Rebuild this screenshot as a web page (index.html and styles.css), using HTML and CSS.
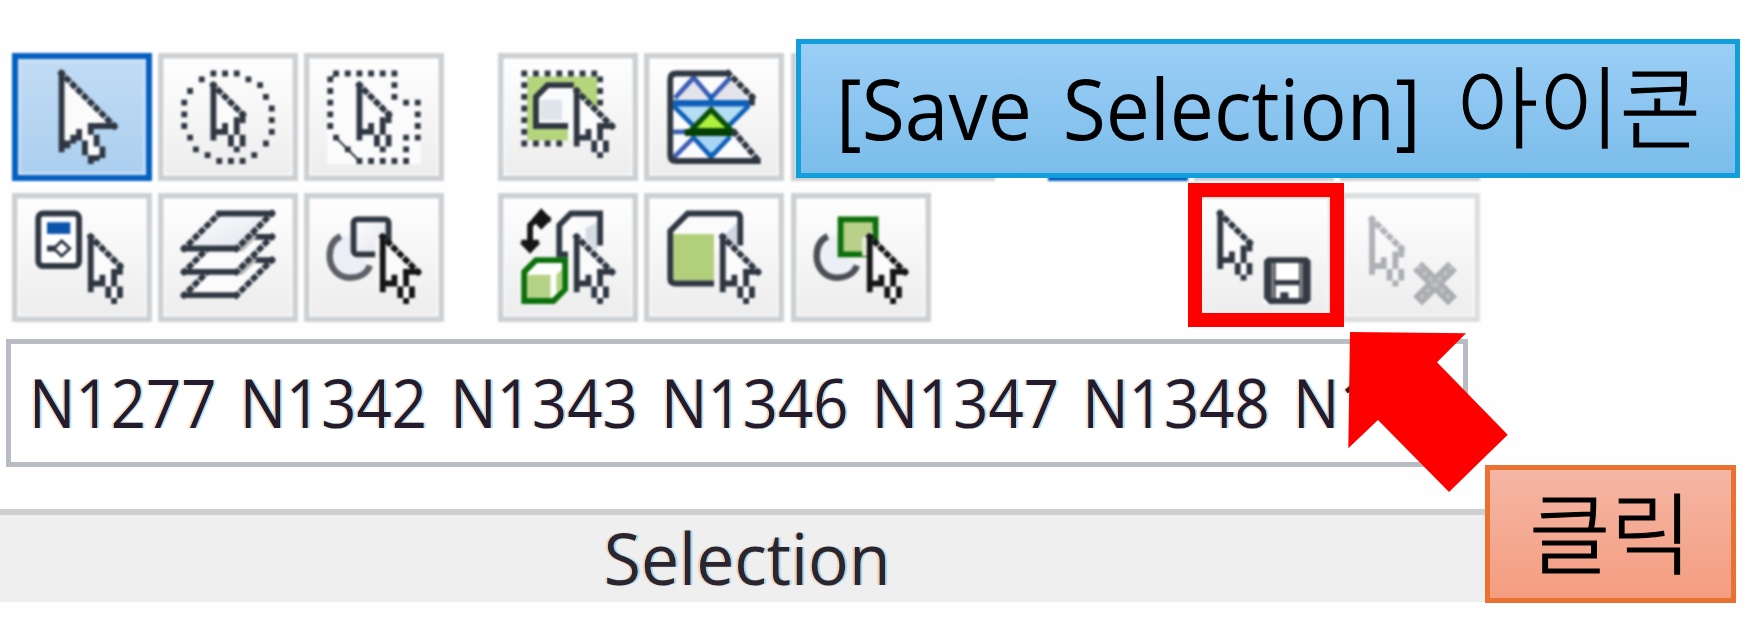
FILE: index.html
```html
<!DOCTYPE html>
<html lang="ko">
<head>
<meta charset="utf-8">
<title>Selection</title>
<link rel="stylesheet" href="styles.css">
</head>
<body>
<svg class="defs" width="0" height="0" aria-hidden="true">
  <defs>
    <linearGradient id="pane" x1="0" y1="0" x2="1" y2="1"><stop offset="0" stop-color="#fff"/><stop offset="1" stop-color="#dfe3ec"/></linearGradient>
    <g id="tail">
      <path class="ln" d="M.5 0V10M1 8.5H3M2.5 7V9M4.5 6V9M3.5 9V11M5.5 9V11M4 11.5H5"/>
    </g>
    <g id="cursor">
      <path class="w" d="M.5.5L6 6 4.8 7.5 5.5 10 4.5 12 3.2 10 2.5 8 .5 9Z"/>
      <use href="#tail"/>
      <path class="bead" d="M.1.1L6 6"/><path class="ln" d="M5.5 5V7"/>
    </g>
    <g id="cursor-wide">
      <path class="w" d="M.5.5L7 6.5 4.8 7.5 5.5 10 4.5 12 3.2 10 2.5 8 .5 9Z"/>
      <use href="#tail"/>
      <path class="bead" d="M.1.1L7 7"/><path class="ln" d="M4 6.5H7"/>
    </g>
  </defs>
</svg>

<main class="panel">
  <div class="tools">
    <button class="tool on" aria-label="Select"><svg viewBox="0 0 24 22">
      <path class="w" d="M8.5 3.5L17.5 12.5H13.5L15.5 17 13.5 18 11.5 14 8.5 16.5Z"/>
      <path class="ln" d="M8.5 3V17M13 12.5H18M13.5 12V14M14.5 14V16M15.5 16V18M14.5 17.5V18.5M13.5 17.5V19M12.5 15V17.5M11.5 13V15M10.5 14V15.5M9.5 15V16.3"/>
      <path class="bead" d="M8.1 3.1L18 13"/>
    </svg></button>
    <button class="tool" aria-label="Circle select"><svg viewBox="0 0 24 22">
      <path class="dot" d="M9 3.5h1m1 0h1m1 0h1M15 4.5h1M17 5.5h1M18 7.5h1M19 9.5h1M19 11.5h1M19 13.5h1M18 15.5h1M16 17.5h1M14 18.5h1M12 18.5h1M10 18.5h1M8 17.5h1M6 16.5h1M5 14.5h1M4 12.5h1M4 10.5h1M4 8.5h1M5 6.5h1M7 4.5h1"/>
      <use href="#cursor" x="9" y="5"/>
    </svg></button>
    <button class="tool" aria-label="Polygon select"><svg viewBox="0 0 24 22">
      <path class="w" d="M4 3H16V8H20V19H4Z"/>
      <path class="thin" d="M5.5 14.5L9.5 18.5M4.5 4.5L5.5 3.5"/>
      <path class="dot" d="M5 3.5h1m1 0h1m1 0h1m1 0h1m1 0h1m1 0h1M15 5.5h1M15 7.5h1M17 8.5h1m1 0h1M19 10.5h1M19 12.5h1M19 14.5h1M17 14.5h1M17 16.5h1M17 18.5h1M15 18.5h1M13 18.5h1M11 18.5h1M9 18.5h1M7 16.5h1M5 14.5h1M4 12.5h1M4 10.5h1M4 8.5h1M4 6.5h1M4 4.5h1"/>
      <use href="#cursor" x="9" y="5"/>
    </svg></button>
    <span></span>
    <button class="tool" aria-label="Window select"><svg viewBox="0 0 24 22">
      <path fill="#b5d57d" d="M5 4H17V10L13 6.5V15H5Z"/>
      <path class="w" d="M7 7L8.5 5.5H12.5L13 6V15H12V12.5H7Z"/>
      <path fill="#dfe3ea" d="M7.3 8H11V11.5H7.3Z"/>
      <path class="ln" d="M12 12.5H6.5V7.5L8.5 5.5H13"/>
      <path class="dot" d="M4 3.5h1m1 0h1m1 0h1m1 0h1m1 0h1m1 0h1m1 0h1M17 4.5h1M17 6.5h1M17 8.5h1M4 5.5h1M4 7.5h1M4 9.5h1M4 11.5h1M4 13.5h1M4 15.5h1m1 0h1m1 0h1m1 0h1"/>
      <use href="#cursor-wide" x="13" y="6"/>
    </svg></button>
    <button class="tool" aria-label="Plane select"><svg viewBox="0 0 24 22">
      <path class="w" d="M4.5 3.5H14.5L18.5 8 14 13 19 18.5H4.5Z"/>
      <path fill="#e3e4ea" d="M5 7.5L8.5 4.5 11.5 7.5 14.5 4.5 17.5 7.5V8H5Z"/>
      <path fill="#b4def3" d="M5.5 9H17.5L14.5 12.5H8Z"/>
      <path fill="#a9d5f5" d="M8 14H15L11.5 18Z"/>
      <path fill="none" stroke="#3b5db4" stroke-width=".8" d="M5.3 7.7L8.5 4.2 11.5 7.7 14.8 4.2M5 13.5H7.5M5 18L8.5 14.5"/>
      <path fill="none" stroke="#0e5fb9" stroke-width=".8" d="M5 9L9 13M18 9L14 13M8.3 14.3L11.5 17.8 14.8 14.3M11.5 17V19M11.5 7V9"/>
      <path fill="none" stroke="#0e5fb9" stroke-width="1.1" d="M5 8.6H18"/>
      <path fill="#aef03c" stroke="#0a4f0a" stroke-width=".9" d="M11.5 9.7L15 13.3H8Z"/>
      <path stroke="#043f04" stroke-width="1.2" d="M7 13.6H15.8"/>
      <path class="ln" d="M14.8 3.5H5.5Q4.5 3.5 4.5 4.5V17.5Q4.5 18.5 5.5 18.5H20M18.5 7V9"/>
      <path class="bead" d="M14.1 3.1L19 8M15.2 13.2L19.5 18.3"/>
    </svg></button>
    <button class="tool split" aria-label="Volume select"></button>
    <span></span>
    <button class="tool on" aria-label="Node select"></button>
    <button class="tool" aria-label="Element select"></button>
    <button class="tool" aria-label="Select all"></button>

    <button class="tool" aria-label="Select by property"><svg viewBox="0 0 24 22">
      <rect class="ln wf" x="4.5" y="3.5" width="7" height="9" rx=".8"/>
      <path fill="#0a54ab" d="M6 5H10V7H6Z"/>
      <path class="ln" d="M6 9.5H8"/><path class="ln wf half" d="M8.5 8.2L9.9 9.5 8.5 10.8 7.2 9.5Z"/>
      <use href="#cursor" x="13" y="7"/>
    </svg></button>
    <button class="tool" aria-label="Select by layer"><svg viewBox="0 0 24 22">
      <path class="w" d="M10.5 11.5H19.5L13.5 17.5H4.5Z"/><path class="ln" d="M16 11.5H20M4 17.5H13.7"/><path class="bead" d="M19.9 11.1L13 18M4.1 17.9L8.5 13.5"/>
      <path fill="#bcbcbc" d="M9 14H14.5L17 11.5 16 11H13Z"/>
      <path class="w" d="M10.5 7.5H19.5L13.5 13.5H4.5Z"/><path class="ln" d="M16 7.5H20M4 13.5H13.7"/><path class="bead" d="M19.9 7.1L13 14M4.1 13.9L8.5 9.5"/>
      <path fill="#bcbcbc" d="M9 10H14.5L17 7.5 16 7H13Z"/>
      <path fill="url(#pane)" d="M10.5 3.5H19.5L13.5 9.5H4.5Z"/><path class="ln" d="M10 3.5H20M4 9.5H13.7"/><path class="bead" d="M19.9 3.1L13 10M4.1 9.9L10.5 3.5"/>
    </svg></button>
    <button class="tool" aria-label="Select intersecting"><svg viewBox="0 0 24 22">
      <path fill="#eceff6" d="M6.3 7.4A3.8 3.8 0 0 0 7.8 14.5Q10.5 14.4 11.3 12.4L9 10.5V7Z"/>
      <path fill="none" stroke="#5d6066" stroke-width="1.1" d="M6.3 7.4C4.8 8.1 4.4 9.5 4.4 10.8C4.4 13 6 14.5 7.9 14.5C9.7 14.5 10.9 13.6 11.3 12.4"/>
      <rect class="ln pane" x="8.5" y="4.5" width="6" height="6" rx=".6"/>
      <path fill="#f6f6f6" d="M12.2 7.7H13V16H12.2Z"/>
      <use class="black" href="#cursor-wide" x="13" y="7"/>
    </svg></button>
    <span></span>
    <button class="tool" aria-label="Select previous"><svg viewBox="0 0 24 22">
      <g class="black"><path class="ln" d="M9 4.5H6.5L5.5 5.5V9"/><path class="k" d="M7.4 2.6L9.2 4.5 7.4 6.3 5.8 4.5ZM3.7 8.5H7.3L5.5 10.4ZM4 8H7V9H4Z"/></g>
      <path class="w" d="M10.5 5.5L12.5 3.5H17.5V10H10.5Z"/><path fill="#d5dae5" d="M15 6L17 5V10L15 8Z"/>
      <path class="ln" d="M17.5 9V3.5H12.5L10.5 5.5V10.5H12"/>
      <path fill="#fff" stroke="#0b700b" d="M4.5 13.5L6.5 11.5H11.5V16.5L9.5 18.5H4.5Z"/>
      <path fill="#b5d286" d="M5 14H9V18H5ZM10 14L11 13V16.5L10 17Z"/>
      <use href="#cursor-wide" x="13" y="7"/>
    </svg></button>
    <button class="tool" aria-label="Select solid"><svg viewBox="0 0 24 22">
      <path class="w" d="M4.5 6.5L7.5 3.5H16.5V10H12V15H4.5Z"/>
      <path fill="#cfd5e1" d="M13.5 7.5L16 5V9.5L14.5 8.5Z"/><path fill="#b2d07c" d="M5 7H12V15H5Z"/>
      <path class="ln" d="M12 15.5H5.3Q4.5 15.5 4.5 14.7V6.5L7.5 3.5H15.8Q16.5 3.5 16.5 4.3V9"/>
      <use href="#cursor-wide" x="13" y="7"/>
    </svg></button>
    <button class="tool" aria-label="Select inside"><svg viewBox="0 0 24 22">
      <path fill="#eceff6" d="M6.3 7.4A3.8 3.8 0 0 0 7.8 14.5Q10.5 14.4 11.3 12.4L9 10.5V7Z"/>
      <path fill="none" stroke="#4c4f55" stroke-width="1.1" d="M6.3 7.4C4.8 8.1 4.4 9.5 4.4 10.8C4.4 13 6 14.5 7.9 14.5C9.7 14.5 10.9 13.6 11.3 12.4"/>
      <path fill="#b9d08a" stroke="#0b700b" d="M8.5 4.5H14.5V10.5H8.5Z"/>
      <path fill="#e9eddd" d="M12.2 7.7L14 6.5V8L13 10.8H12.2Z"/>
      <use class="black" href="#cursor-wide" x="13" y="7"/>
    </svg></button>
    <span></span>
    <i></i>
    <button class="tool" aria-label="Save Selection"><svg viewBox="0 0 24 22">
      <use href="#cursor" x="4" y="3"/>
      <path fill="#fff" d="M12 11H20V19H12Z"/>
      <path fill="#343b45" fill-rule="evenodd" d="M12.6 11H19.4L20 11.6V18.4L19.3 19H12.9L12 18V11.6ZM14 12V14.9H18V12ZM14 15.8V18H14.8V17H16.2V18H18V15.8Z"/>
      <path fill="none" stroke="#8c8f90" stroke-width=".45" d="M13.5 12V18M18.4 12V18"/>
    </svg></button>
    <button class="tool off" aria-label="Delete Selection"><svg viewBox="0 0 24 22">
      <use href="#cursor" x="5" y="4"/>
      <path stroke="#2f3742" stroke-width="2.2" fill="none" d="M13.3 12.5L19.3 18.5M19.3 12.5L13.3 18.5"/>
      <path stroke="#777" stroke-width=".6" stroke-dasharray=".7 .7" fill="none" d="M13.3 12.5L19.3 18.5M19.3 12.5L13.3 18.5"/>
    </svg></button>
  </div>

  <div class="field"><span>N1277 N1342 N1343 N1346 N1347 N1348 N1</span></div>
  <footer class="caption"><span>Selection</span></footer>
</main>

<div class="mark"></div>
<svg class="arrow" viewBox="1348 332 160 160" aria-hidden="true"><path fill="#f00" d="M1350 332L1466 333.3 1437 362.3 1507.7 434.7 1449 492 1378 420 1348.3 448.3Z"/></svg>
<div class="note blue"><span class="latin">[Save Selection]</span><span class="hangul">아이콘</span></div>
<div class="note orange"><span class="hangul">클릭</span></div>
</body>
</html>
```
FILE: styles.css
```css
* { box-sizing: border-box; }
body {
  margin: 0;
  width: 1750px;
  height: 633px;
  position: relative;
  overflow: hidden;
  background: #fefefe;
  font-family: "Open Sans", "Noto Sans", sans-serif;
}
.defs { position: absolute; }

.panel { width: 1485px; padding-top: 52.6px; }
.tools {
  display: grid;
  grid-template-columns: repeat(3, 140px) 40.6px repeat(3, 140px) 104.3px repeat(3, 140px);
  grid-auto-rows: 128.5px;
  gap: 12.3px 6.4px;
  margin-left: 11.7px;
}
.tool {
  padding: 0;
  border: 0;
  background: linear-gradient(#fff, #ececec);
  box-shadow: inset 0 0 0 5.5px #cdd0d3, inset 0 0 2px 7px #fff;
  filter: blur(.9px);
}
.tool.on {
  background: linear-gradient(#c3dcf5, #aacfef);
  box-shadow: inset 0 0 0 6px #0560c0, inset 0 0 3px 8px #d3e6f8;
}
.tool.off { box-shadow: inset 0 0 0 5.5px #dcdee0, inset 0 0 2px 7px #fff; }
.tool.off svg { opacity: .36; }
.tool.split { width: 204px; }
.tool svg { display: block; width: 100%; height: 100%; color: #2f3742; }

.ln, .bead, .dot, .thin { fill: none; stroke: currentColor; stroke-width: 1; }
.ln.wf { fill: #fff; }
.ln.pane { fill: url(#pane); }
.ln.half { stroke-width: .5; }
.bead { stroke-dasharray: 1.16 .254; }
.thin { stroke-width: .35; }
.w { fill: #fbfbfc; }
.k { fill: currentColor; }
.black { color: #151515; }

.field {
  width: 1462px;
  height: 128px;
  margin: 17.1px 0 0 6px;
  padding-left: 18px;
  border: 5.5px solid #b9bcc3;
  background: #fff;
  color: #241c2c;
  font-size: 67px;
  line-height: 117px;
  word-spacing: 7.9px;
  white-space: nowrap;
  text-shadow: -2px 0 1px rgba(255, 150, 50, .4), 2px 0 1px rgba(50, 180, 255, .45);
  filter: blur(.7px);
}
.field span { display: inline-block; transform: scaleX(.92); transform-origin: left; }
.caption {
  height: 93px;
  margin-top: 42.5px;
  padding-left: 10px;
  border-top: 6px solid #cdcfd1;
  background: #efefef;
  color: #2b2530;
  font-size: 72px;
  line-height: 84px;
  text-align: center;
  text-shadow: -2px 0 1px rgba(255, 150, 50, .4), 2px 0 1px rgba(50, 180, 255, .45);
}
.caption span { display: inline-block; transform: scaleX(.942); filter: blur(.7px); }

/* Annotations drawn over the toolbar */
.mark {
  position: absolute;
  left: 1188px;
  top: 183px;
  width: 156px;
  height: 144px;
  border: 14px solid #f00;
}
.arrow { position: absolute; left: 1348px; top: 332px; width: 160px; height: 160px; }
.note { position: absolute; display: flex; color: #000; white-space: nowrap; }
.note.blue {
  left: 796px;
  top: 39px;
  width: 944px;
  height: 139px;
  padding: 0 34px 0 35px;
  justify-content: space-between;
  border: 5px solid #109fda;
  background: linear-gradient(#9bcef5, #7bbdeb);
}
.note.orange {
  left: 1485px;
  top: 465px;
  width: 251px;
  height: 138px;
  justify-content: center;
  border: 5px solid #e97132;
  background: linear-gradient(#f5b6a4, #f49d80);
}
.latin {
  width: 580px;
  font-size: 84px;
  line-height: 128px;
  word-spacing: 11px;
  transform: scaleX(.936);
  transform-origin: left;
}
.hangul {
  font-family: "Noto Sans CJK KR", sans-serif;
  font-weight: 300;
  font-size: 88.5px;
  line-height: 116px;
  -webkit-text-stroke: 1.2px #000;
}
```
